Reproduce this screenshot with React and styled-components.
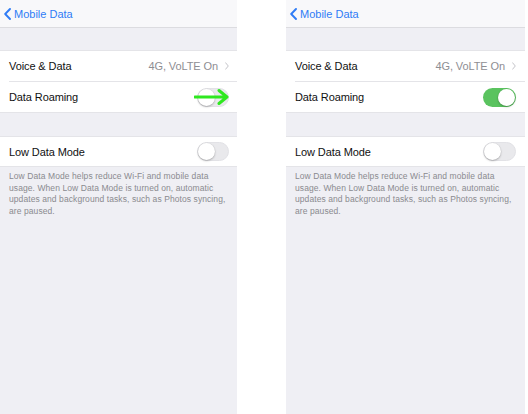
import React from "react";
import styled, { createGlobalStyle } from "styled-components";

const Global = createGlobalStyle`
  html, body { margin: 0; padding: 0; background: #ffffff; }
  body { font-family: "Liberation Sans", Arial, sans-serif; -webkit-font-smoothing: antialiased; }
`;

const Page = styled.div`
  display: flex;
  width: 528px;
  height: 414px;
  background: #ffffff;
  overflow: hidden;
`;

const Gap = styled.div`
  width: 49px;
  flex: none;
`;

const Screen = styled.div`
  width: ${(p) => p.$w}px;
  flex: none;
  height: 414px;
  background: #efeff4;
  display: flex;
  flex-direction: column;
`;

const NavBar = styled.div`
  height: 27px;
  flex: none;
  background: #f8f8fa;
  border-bottom: 1px solid #dcdce0;
  display: flex;
  align-items: center;
  padding-left: 4px;
  color: #2f7cf6;
  font-size: 11px;
  gap: 3px;
`;

const Group = styled.div`
  margin-top: ${(p) => p.$top}px;
  background: #ffffff;
  border-top: 1px solid #e4e4e8;
  border-bottom: 1px solid #e4e4e8;
  display: flex;
  flex-direction: column;
`;

const Row = styled.div`
  height: ${(p) => p.$h || 30}px;
  display: flex;
  align-items: center;
  padding-right: ${(p) => p.$pr}px;
  position: relative;
  border-top: ${(p) => (p.$sep ? "1px solid #e4e4e8" : "none")};
  margin-left: ${(p) => (p.$sep ? 9 : 0)}px;
  padding-left: ${(p) => (p.$sep ? 0 : 9)}px;
`;

const Label = styled.span`
  flex: 1;
  font-size: 11px;
  color: #111111;
  letter-spacing: -0.1px;
`;

const Detail = styled.span`
  font-size: 11px;
  color: #8e8e93;
  display: flex;
  align-items: center;
  gap: 7px;
  letter-spacing: -0.1px;
`;

const Track = styled.div`
  width: ${(p) => p.$w}px;
  height: 19px;
  border-radius: 10px;
  box-sizing: border-box;
  background: ${(p) => (p.$on ? "#5ac35f" : "#e9e9ec")};
  border: ${(p) => (p.$on ? "none" : "1px solid #e2e2e6")};
  position: relative;
  flex: none;
`;

const Knob = styled.div`
  position: absolute;
  top: ${(p) => (p.$on ? 1 : 0)}px;
  ${(p) => (p.$on ? "right: 1px;" : "left: 0px;")}
  width: 17px;
  height: 17px;
  border-radius: 50%;
  background: #ffffff;
  box-shadow: 0 1px 2px rgba(0, 0, 0, 0.25), 0 0 0 0.5px rgba(0, 0, 0, 0.06);
`;

const Footer = styled.p`
  margin: 4px 0 0;
  padding: 0 0 0 9px;
  font-size: 8.5px;
  letter-spacing: 0.08px;
  line-height: 11.7px;
  color: #8a8a8f;
  white-space: nowrap;
`;

const ArrowSvg = styled.svg`
  position: absolute;
  right: 7px;
  top: 6px;
`;

const Chevron = () => (
  <svg width="7" height="12" viewBox="0 0 7 12">
    <path d="M6 1 L1.2 6 L6 11" fill="none" stroke="#2f7cf6" strokeWidth="1.9" strokeLinecap="round" strokeLinejoin="round" />
  </svg>
);

const SmallChevron = () => (
  <svg width="4" height="8" viewBox="0 0 4 8">
    <path d="M0.6 0.8 L3.3 4 L0.6 7.2" fill="none" stroke="#c4c4c9" strokeWidth="1" strokeLinecap="round" strokeLinejoin="round" />
  </svg>
);

const Toggle = ({ on, w }) => (
  <Track $on={on} $w={w}>
    <Knob $on={on} />
  </Track>
);

const Arrow = () => (
  <ArrowSvg width="36" height="18" viewBox="0 0 36 18">
    <path d="M1 9 L33 9 M25 2.5 L33 9 L25 15.5" fill="none" stroke="#2ee81f" strokeWidth="3" strokeLinecap="round" strokeLinejoin="round" />
  </ArrowSvg>
);

const Phone = ({ width, roaming, arrow, pr, tw }) => (
  <Screen $w={width}>
    <NavBar>
      <Chevron />
      <span>Mobile Data</span>
    </NavBar>
    <Group $top={22}>
      <Row $pr={pr}>
        <Label>Voice &amp; Data</Label>
        <Detail>
          4G, VoLTE On
          <SmallChevron />
        </Detail>
      </Row>
      <Row $pr={pr} $sep>
        <Label>Data Roaming</Label>
        <Toggle on={roaming} w={tw} />
        {arrow && <Arrow />}
      </Row>
    </Group>
    <Group $top={23}>
      <Row $pr={pr} $h={29}>
        <Label>Low Data Mode</Label>
        <Toggle on={false} w={tw} />
      </Row>
    </Group>
    <Footer>
      Low Data Mode helps reduce Wi-Fi and mobile data
      <br />
      usage. When Low Data Mode is turned on, automatic
      <br />
      updates and background tasks, such as Photos syncing,
      <br />
      are paused.
    </Footer>
  </Screen>
);

export default function App() {
  return (
    <Page>
      <Global />
      <Phone width={237} roaming={false} arrow pr={8} tw={32} />
      <Gap />
      <Phone width={239} roaming pr={9} tw={33} />
    </Page>
  );
}
